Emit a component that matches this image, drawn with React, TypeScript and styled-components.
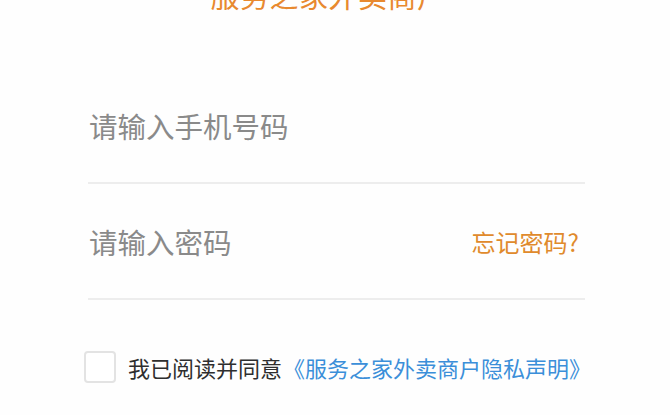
import React, { useState } from 'react'
import styled, { createGlobalStyle } from 'styled-components'

const GlobalStyle = createGlobalStyle`
  html, body {
    margin: 0;
    padding: 0;
    background: #ffffff;
    overflow: hidden;
  }
  body {
    font-family: "Noto Sans CJK SC", "Noto Sans", sans-serif;
  }
`

const Page = styled.div`
  width: 670px;
  height: 415px;
  overflow: hidden;
  background: #fefefe;
  display: flex;
  flex-direction: column;
  padding: 0 85px 0 88px;
  box-sizing: border-box;
`

const Title = styled.h1`
  margin: -25px 0 0;
  height: 40px;
  line-height: 40px;
  font-size: 29px;
  font-weight: 400;
  color: #e8892f;
  text-align: center;
  padding-right: 16px;
  letter-spacing: 0.5px;
`

const Form = styled.div`
  margin-top: 53px;
  display: flex;
  flex-direction: column;
`

const Field = styled.label`
  height: 114px;
  display: flex;
  align-items: center;
  justify-content: space-between;
  border-bottom: 2px solid #ededed;
`

const Input = styled.input`
  flex: 1;
  min-width: 0;
  border: none;
  outline: none;
  background: transparent;
  padding: 0 0 0 1px;
  font-family: "Noto Sans CJK SC", sans-serif;
  font-size: 28.5px;
  color: #333;
  &::placeholder {
    color: #8a8a8a;
  }
`

const Forgot = styled.span`
  font-size: 24px;
  color: #e08a2c;
  padding-right: 6px;
  white-space: nowrap;
`

const Agree = styled.div`
  margin-top: 51px;
  margin-left: -4px;
  display: flex;
  align-items: center;
  gap: 12px;
`

const Box = styled.span<{ $checked: boolean }>`
  width: 32px;
  height: 32px;
  box-sizing: border-box;
  border: 2px solid #e3e3e3;
  border-radius: 4px;
  background: ${({ $checked }) => ($checked ? '#e8892f' : '#fff')};
  flex-shrink: 0;
`

const AgreeText = styled.span`
  display: flex;
  align-items: center;
  gap: 1px;
  font-size: 22px;
  color: #2e2e2e;
  white-space: nowrap;
`

const Policy = styled.span`
  font-size: 22px;
  color: #3b8fd9;
`

export default function App() {
  const [checked, setChecked] = useState(false)

  return (
    <>
      <GlobalStyle />
      <Page>
        <Title>服务之家外卖商户</Title>
        <Form>
          <Field>
            <Input type="tel" placeholder="请输入手机号码" />
          </Field>
          <Field>
            <Input type="password" placeholder="请输入密码" />
            <Forgot>忘记密码?</Forgot>
          </Field>
        </Form>
        <Agree onClick={() => setChecked(!checked)}>
          <Box $checked={checked} />
          <AgreeText>
            我已阅读并同意
            <Policy>《服务之家外卖商户隐私声明》</Policy>
          </AgreeText>
        </Agree>
      </Page>
    </>
  )
}
